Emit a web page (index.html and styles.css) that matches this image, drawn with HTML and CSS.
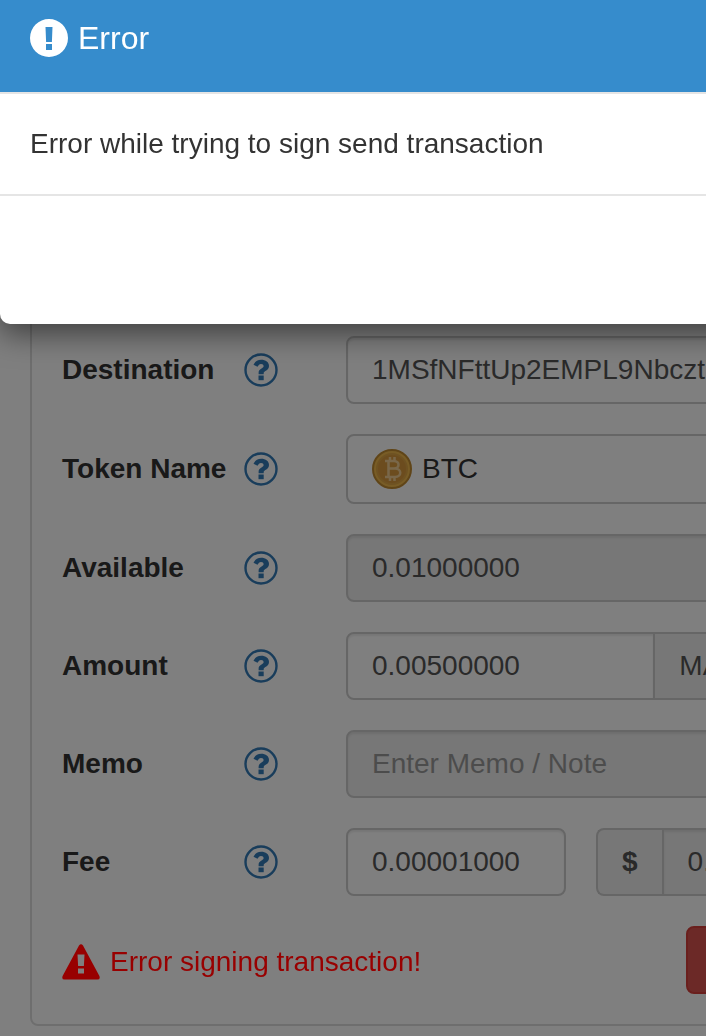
FILE: index.html
```html
<!DOCTYPE html>
<html lang="en">
<head>
<meta charset="utf-8">
<meta name="viewport" content="width=device-width, initial-scale=1">
<title>Error</title>
<link rel="stylesheet" href="styles.css">
</head>
<body>
<svg class="sprite" aria-hidden="true">
  <symbol id="help" viewBox="0 0 34 34">
    <circle cx="17" cy="17" r="15.5" fill="none" stroke="currentColor" stroke-width="2.4"/>
    <path d="M9.500 11.800C11 8.300 13.600 6.800 17.200 6.800c4.500 0 7.800 2.400 7.800 6.200 0 4.700-5.300 4.600-5.300 7.200v1H14.600v-1.500c0-4 5-4.300 5-6.400 0-1.400-1-2.300-2.600-2.300-1.600 0-2.500 1.200-3.500 2.700z" fill="currentColor"/>
    <rect x="14.500" y="22.500" width="5.200" height="4.700" fill="currentColor"/>
  </symbol>
</svg>

<main class="page">
  <form class="panel">
    <div class="row">
      <label class="label" for="destination">Destination</label>
      <button class="help" type="button" aria-label="Destination help"><svg><use href="#help"/></svg></button>
      <input class="control" id="destination" type="text" value="1MSfNFttUp2EMPL9Nbczt7">
    </div>
    <div class="row">
      <label class="label" for="token">Token Name</label>
      <button class="help" type="button" aria-label="Token name help"><svg><use href="#help"/></svg></button>
      <button class="control token" id="token" type="button">
        <svg class="coin" viewBox="0 0 40 40" aria-hidden="true">
          <circle cx="20" cy="20" r="19" fill="#f0b94c" stroke="#c08a30" stroke-width="2"/>
          <circle cx="20" cy="20" r="15" fill="#d9993c" stroke="#dda445" stroke-width="2"/>
          <g fill="none" stroke="#f2cf94" stroke-width="2.500">
            <path d="M13 12h9c6 0 6 7.500 0 7.500h-6h7c7 0 7 8.500 0 8.500H13M16.500 12v16M18 8v4M22.500 8v4M18 28v4M22.500 28v4"/>
          </g>
        </svg>
        BTC
      </button>
    </div>
    <div class="row">
      <label class="label" for="available">Available</label>
      <button class="help" type="button" aria-label="Available help"><svg><use href="#help"/></svg></button>
      <input class="control muted" id="available" type="text" value="0.01000000" readonly>
    </div>
    <div class="row">
      <label class="label" for="amount">Amount</label>
      <button class="help" type="button" aria-label="Amount help"><svg><use href="#help"/></svg></button>
      <div class="group">
        <input class="control" id="amount" type="text" value="0.00500000">
        <button class="addon" type="button">MAX</button>
      </div>
    </div>
    <div class="row">
      <label class="label" for="memo">Memo</label>
      <button class="help" type="button" aria-label="Memo help"><svg><use href="#help"/></svg></button>
      <input class="control muted" id="memo" type="text" placeholder="Enter Memo / Note">
    </div>
    <div class="row">
      <label class="label" for="fee">Fee</label>
      <button class="help" type="button" aria-label="Fee help"><svg><use href="#help"/></svg></button>
      <div class="fee">
        <input class="control" id="fee" type="text" value="0.00001000">
        <div class="group">
          <span class="addon currency">$</span>
          <input class="control muted" type="text" value="0.10" aria-label="Fee in dollars" readonly>
        </div>
      </div>
    </div>
    <div class="actions">
      <p class="alert">
        <svg class="warning" viewBox="0 0 38 36" aria-hidden="true">
          <path d="M17 1.500q2-2.500 4 0L37.400 32q1.200 3.500-2 3.500H2.600Q-.6 35.500.6 32zM15.500 10.500l.6 11.500h5.800l.6-11.500zM16 24.500v5h6v-5z" fill="currentColor" fill-rule="evenodd"/>
        </svg>
        Error signing transaction!
      </p>
      <button class="submit" type="button" aria-label="Send"></button>
    </div>
  </form>
</main>

<div class="backdrop"></div>

<section class="modal" role="dialog" aria-labelledby="modal-title">
  <header class="modal-header">
    <svg class="exclaim" viewBox="0 0 38 38" aria-hidden="true">
      <path d="M19 0a19 19 0 1 0 0 38a19 19 0 1 0 0-38zM15.500 8h7l-.6 15h-5.800zM16 25h6v6h-6z" fill="currentColor" fill-rule="evenodd"/>
    </svg>
    <h1 class="modal-title" id="modal-title">Error</h1>
  </header>
  <p class="modal-body">Error while trying to sign send transaction</p>
  <footer class="modal-footer"></footer>
</section>
</body>
</html>
```
FILE: styles.css
```css
* {
  box-sizing: border-box;
}

body {
  margin: 0;
  overflow: hidden;
  background: #fff;
  color: #333;
  font: 28px/40px "Liberation Sans", Arial, sans-serif;
}

button,
input {
  font: inherit;
}

.sprite {
  position: absolute;
  width: 0;
  height: 0;
}

/* The form runs on past the right edge of the window. */
.page {
  margin: 0 -92px 0 30px;
  padding-top: 304px;
}

.panel {
  display: flex;
  flex-direction: column;
  gap: 30px;
  padding: 30px;
  border: 2px solid #ddd;
  border-radius: 8px;
}

.row {
  display: grid;
  grid-template-columns: 182px 102px minmax(0, 1fr);
  align-items: center;
}

.label {
  font-weight: bold;
}

.help {
  width: 34px;
  height: 34px;
  padding: 0;
  border: 0;
  background: none;
  color: #337ab7;
}

.help svg {
  display: block;
  width: 34px;
  height: 34px;
}

.control {
  width: 100%;
  min-width: 0;
  height: 68px;
  padding: 12px 24px;
  border: 2px solid #ccc;
  border-radius: 8px;
  background: #fff;
  box-shadow: inset 0 2px 2px rgba(0, 0, 0, 0.075);
  color: #555;
}

.control::placeholder {
  color: #999;
  opacity: 1;
}

.muted {
  background: #eee;
}

.token {
  display: flex;
  align-items: center;
  gap: 10px;
  height: 70px;
  box-shadow: none;
  color: #333;
}

.coin {
  width: 40px;
  height: 40px;
}

.group {
  display: flex;
}

.addon {
  flex: none;
  padding: 12px 24px;
  border: 2px solid #ccc;
  background: #eee;
  color: #555;
}

.group .control:first-child {
  border-radius: 8px 0 0 8px;
}

.group .control:last-child {
  border-radius: 0 8px 8px 0;
}

.addon:first-child {
  border-right: 0;
  border-radius: 8px 0 0 8px;
}

.addon:last-child {
  border-left: 0;
  border-radius: 0 8px 8px 0;
}

.currency {
  font-weight: bold;
}

.fee {
  display: grid;
  grid-template-columns: 220px minmax(0, 1fr);
  gap: 30px;
}

.actions {
  display: flex;
  align-items: center;
  justify-content: space-between;
}

/* Stays above the backdrop so that the message keeps its strength. */
.alert {
  position: relative;
  z-index: 1;
  display: flex;
  align-items: center;
  gap: 10px;
  margin: 0;
  padding-top: 4px;
  color: #980000;
}

.warning {
  width: 38px;
  height: 36px;
}

.submit {
  width: 80px;
  height: 68px;
  border: 2px solid #d43f3a;
  border-radius: 8px;
  background: #d9534f;
}

.backdrop {
  position: fixed;
  inset: 0;
  background: rgba(0, 0, 0, 0.5);
}

.modal {
  position: absolute;
  z-index: 2;
  top: 0;
  left: 0;
  right: -92px;
  overflow: hidden;
  border-radius: 0 0 10px 10px;
  background: #fff;
  box-shadow: 0 10px 30px rgba(0, 0, 0, 0.5);
}

.modal-header {
  display: flex;
  align-items: center;
  gap: 10px;
  padding: 16px 30px 32px;
  border-bottom: 2px solid #e5e5e5;
  background: #368ccc;
  color: #fff;
}

.exclaim {
  width: 38px;
  height: 38px;
}

.modal-title {
  margin: 0;
  font-size: 32px;
  font-weight: normal;
  line-height: 44px;
}

.modal-body {
  margin: 0;
  padding: 30px;
}

.modal-footer {
  height: 130px;
  border-top: 2px solid #e5e5e5;
}
```
